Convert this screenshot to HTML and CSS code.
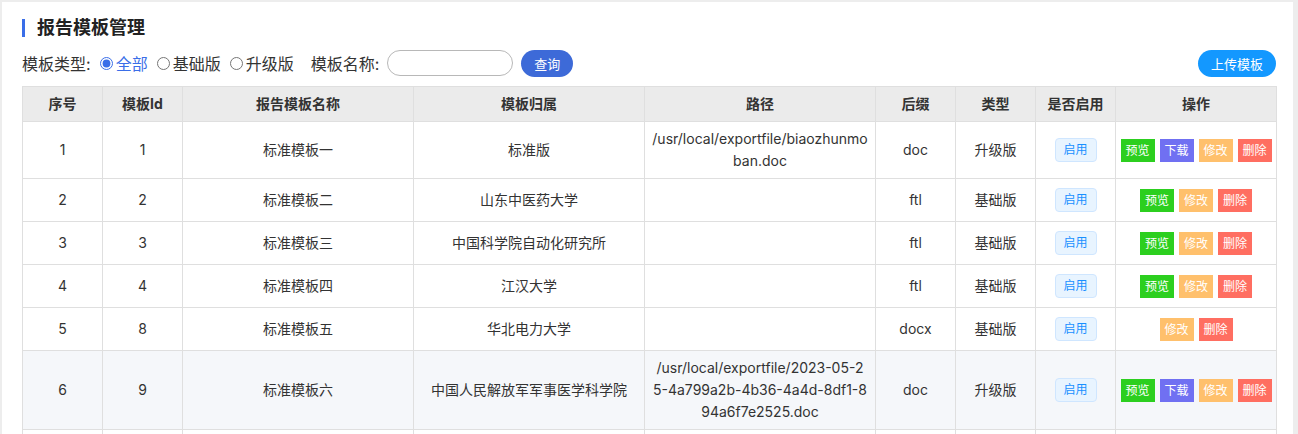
FILE: index.html
```html
<!DOCTYPE html>
<html lang="zh-CN">
<head>
<meta charset="utf-8">
<title>报告模板管理</title>
<link rel="stylesheet" href="styles.css">
</head>
<body>
<div class="page">
  <div class="card">
    <h1 class="title">报告模板管理</h1>
    <div class="filters">
      <div class="filter-left">
        <span class="label">模板类型:</span>
        <label class="radio active"><input type="radio" name="type" checked><span>全部</span></label>
        <label class="radio"><input type="radio" name="type"><span>基础版</span></label>
        <label class="radio"><input type="radio" name="type"><span>升级版</span></label>
        <span class="label name-label">模板名称:</span>
        <input class="search-input" type="text">
        <button class="btn-query">查询</button>
      </div>
      <button class="btn-upload">上传模板</button>
    </div>
    <table class="grid">
      <colgroup>
        <col class="c-narrow"><col class="c-narrow"><col class="c-wide"><col class="c-wide"><col class="c-wide"><col class="c-narrow"><col class="c-narrow"><col class="c-narrow"><col class="c-ops">
      </colgroup>
      <thead>
        <tr><th>序号</th><th>模板Id</th><th>报告模板名称</th><th>模板归属</th><th>路径</th><th>后缀</th><th>类型</th><th>是否启用</th><th>操作</th></tr>
      </thead>
      <tbody>
        <tr>
          <td><div class="cell">1</div></td><td><div class="cell">1</div></td><td><div class="cell">标准模板一</div></td><td><div class="cell">标准版</div></td>
          <td class="td-path"><div class="cell path">/usr/local/exportfile/biaozhunmo<br>ban.doc</div></td><td><div class="cell">doc</div></td><td><div class="cell">升级版</div></td>
          <td><div class="cell"><span class="tag">启用</span></div></td>
          <td class="td-ops"><div class="cell ops"><span class="op green">预览</span><span class="op purple">下载</span><span class="op orange">修改</span><span class="op red">删除</span></div></td>
        </tr>
        <tr>
          <td><div class="cell">2</div></td><td><div class="cell">2</div></td><td><div class="cell">标准模板二</div></td><td><div class="cell">山东中医药大学</div></td>
          <td class="td-path"><div class="cell path"></div></td><td><div class="cell">ftl</div></td><td><div class="cell">基础版</div></td>
          <td><div class="cell"><span class="tag">启用</span></div></td>
          <td class="td-ops"><div class="cell ops"><span class="op green">预览</span><span class="op orange">修改</span><span class="op red">删除</span></div></td>
        </tr>
        <tr>
          <td><div class="cell">3</div></td><td><div class="cell">3</div></td><td><div class="cell">标准模板三</div></td><td><div class="cell">中国科学院自动化研究所</div></td>
          <td class="td-path"><div class="cell path"></div></td><td><div class="cell">ftl</div></td><td><div class="cell">基础版</div></td>
          <td><div class="cell"><span class="tag">启用</span></div></td>
          <td class="td-ops"><div class="cell ops"><span class="op green">预览</span><span class="op orange">修改</span><span class="op red">删除</span></div></td>
        </tr>
        <tr>
          <td><div class="cell">4</div></td><td><div class="cell">4</div></td><td><div class="cell">标准模板四</div></td><td><div class="cell">江汉大学</div></td>
          <td class="td-path"><div class="cell path"></div></td><td><div class="cell">ftl</div></td><td><div class="cell">基础版</div></td>
          <td><div class="cell"><span class="tag">启用</span></div></td>
          <td class="td-ops"><div class="cell ops"><span class="op green">预览</span><span class="op orange">修改</span><span class="op red">删除</span></div></td>
        </tr>
        <tr>
          <td><div class="cell">5</div></td><td><div class="cell">8</div></td><td><div class="cell">标准模板五</div></td><td><div class="cell">华北电力大学</div></td>
          <td class="td-path"><div class="cell path"></div></td><td><div class="cell">docx</div></td><td><div class="cell">基础版</div></td>
          <td><div class="cell"><span class="tag">启用</span></div></td>
          <td class="td-ops"><div class="cell ops"><span class="op orange">修改</span><span class="op red">删除</span></div></td>
        </tr>
        <tr class="hover">
          <td><div class="cell">6</div></td><td><div class="cell">9</div></td><td><div class="cell">标准模板六</div></td><td><div class="cell">中国人民解放军军事医学科学院</div></td>
          <td class="td-path"><div class="cell path">/usr/local/exportfile/2023-05-2<br>5-4a799a2b-4b36-4a4d-8df1-8<br>94a6f7e2525.doc</div></td><td><div class="cell">doc</div></td><td><div class="cell">升级版</div></td>
          <td><div class="cell"><span class="tag">启用</span></div></td>
          <td class="td-ops"><div class="cell ops"><span class="op green">预览</span><span class="op purple">下载</span><span class="op orange">修改</span><span class="op red">删除</span></div></td>
        </tr>
        <tr>
          <td><div class="cell"></div></td><td><div class="cell"></div></td><td><div class="cell"></div></td><td><div class="cell"></div></td>
          <td><div class="cell"></div></td><td><div class="cell"></div></td><td><div class="cell"></div></td><td><div class="cell"></div></td><td><div class="cell"></div></td>
        </tr>
      </tbody>
    </table>
  </div>
</div>
</body>
</html>
```
FILE: styles.css
```css
html, body {
  margin: 0;
  height: 100%;
  overflow: hidden;
}
body {
  background: #ededed;
  font-family: Inter, "Noto Sans CJK SC", sans-serif;
  color: #333;
}
.page {
  padding: 2px 5px 0 2px;
}
.card {
  background: #fff;
  padding: 14px 17px 0 20px;
  min-height: 480px;
}
.title {
  margin: 0;
  height: 24px;
  line-height: 24px;
  font-size: 18px;
  font-weight: bold;
  color: #222;
  display: flex;
  align-items: center;
}
.title::before {
  content: "";
  width: 3px;
  height: 18px;
  background: #3a6ee8;
  margin-right: 12px;
}
.filters {
  margin-top: 9px;
  height: 28px;
  display: flex;
  align-items: center;
  justify-content: space-between;
}
.filter-left {
  display: flex;
  align-items: center;
}
.label {
  font-size: 16px;
  color: #333;
}
.name-label {
  margin-left: 17px;
}
.radio {
  display: flex;
  align-items: center;
  font-size: 16px;
  color: #333;
}
.radio input {
  margin: 0 3px 0 9px;
  width: 13px;
  height: 13px;
  accent-color: #3a6ee8;
}
.radio.active span {
  color: #3a6ee8;
}
.search-input {
  margin-left: 8px;
  width: 126px;
  height: 26px;
  box-sizing: border-box;
  border: 1px solid #b8b8b8;
  border-radius: 13px;
  outline: none;
  padding: 0 10px;
}
.btn-query {
  margin-left: 8px;
  width: 52px;
  height: 27px;
  border: none;
  border-radius: 14px;
  background: #3d6ad8;
  color: #fff;
  font-family: inherit;
  font-size: 13px;
  padding: 0;
}
.btn-upload {
  width: 78px;
  height: 27px;
  border: none;
  border-radius: 14px;
  background: #1398ff;
  color: #fff;
  font-family: inherit;
  font-size: 13px;
  padding: 0;
}
.grid {
  margin-top: 9px;
  width: 100%;
  table-layout: fixed;
  border-collapse: collapse;
  font-size: 14px;
}
.c-narrow { width: 80px; }
.c-wide { width: 231px; }
.c-ops { width: 161px; }
.grid th, .grid td {
  border: 1px solid #dfdfdf;
  text-align: center;
  vertical-align: middle;
}
.grid th {
  background: #ebebeb;
  font-weight: bold;
  color: #333;
  padding: 6px 8px;
  line-height: 22px;
}
.grid td {
  padding: 6px 8px;
  line-height: 22px;
  color: #333;
}
.grid td.td-path {
  padding: 6px 2px;
}
.grid td.td-ops {
  padding: 6px 0;
}
.grid tr.hover td {
  background: #f5f7fa;
}
.cell {
  min-height: 30px;
  display: flex;
  align-items: center;
  justify-content: center;
}
.cell.path {
  word-break: break-all;
  text-align: center;
}
.tag {
  display: inline-block;
  width: 42px;
  height: 24px;
  box-sizing: border-box;
  line-height: 22px;
  font-size: 12px;
  color: #1890ff;
  background: #e8f4ff;
  border: 1px solid #cfe6ff;
  border-radius: 4px;
}
.ops {
  gap: 5px;
}
.op {
  flex: none;
  width: 34px;
  height: 23px;
  line-height: 23px;
  font-size: 12px;
  color: #fff;
}
.op.green { background: #2ccf1f; }
.op.purple { background: #7070f2; }
.op.orange { background: #ffc06c; }
.op.red { background: #ff6e61; }
```
